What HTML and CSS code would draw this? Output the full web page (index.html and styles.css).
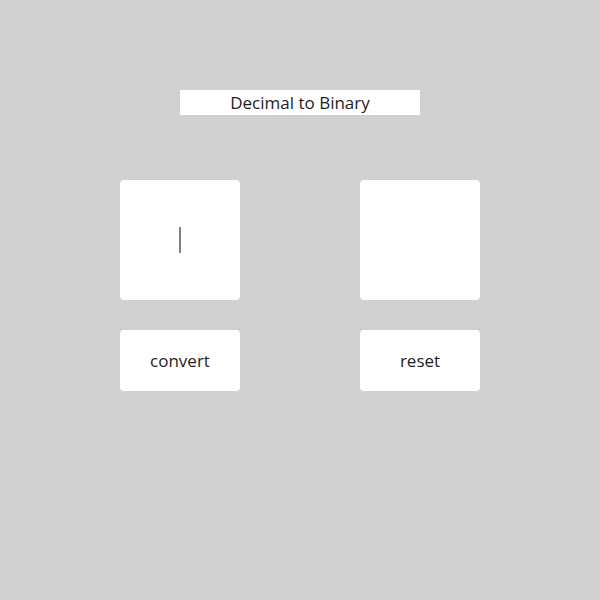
FILE: index.html
```html
<!DOCTYPE html>
<html>
<head>
<meta charset="utf-8">
<link rel="stylesheet" href="styles.css">
</head>
<body>
<main class="page">
  <div class="title">Decimal to Binary</div>
  <div class="grid">
    <div class="box"><span class="caret"></span></div>
    <div class="box"></div>
    <div class="btn">convert</div>
    <div class="btn">reset</div>
  </div>
</main>
</body>
</html>
```
FILE: styles.css
```css
html, body {
  margin: 0;
  padding: 0;
  background: #d2d1d2;
  width: 600px;
  height: 600px;
}
.page {
  display: flex;
  flex-direction: column;
  align-items: center;
  padding-top: 90px;
  font-family: "Open Sans", "Noto Sans", sans-serif;
  color: #1e1e1e;
}
.title {
  width: 240px;
  height: 25px;
  background: #fff;
  display: flex;
  align-items: center;
  justify-content: center;
  font-size: 17px;
}
.grid {
  margin-top: 65px;
  display: grid;
  grid-template-columns: 120px 120px;
  column-gap: 120px;
  row-gap: 30px;
}
.box {
  width: 120px;
  height: 120px;
  background: #fff;
  border-radius: 4px;
  display: flex;
  align-items: center;
  justify-content: center;
}
.caret {
  width: 2px;
  height: 26px;
  background: #808080;
}
.btn {
  height: 61px;
  background: #fff;
  border-radius: 4px;
  display: flex;
  align-items: center;
  justify-content: center;
  font-size: 17px;
}
```
